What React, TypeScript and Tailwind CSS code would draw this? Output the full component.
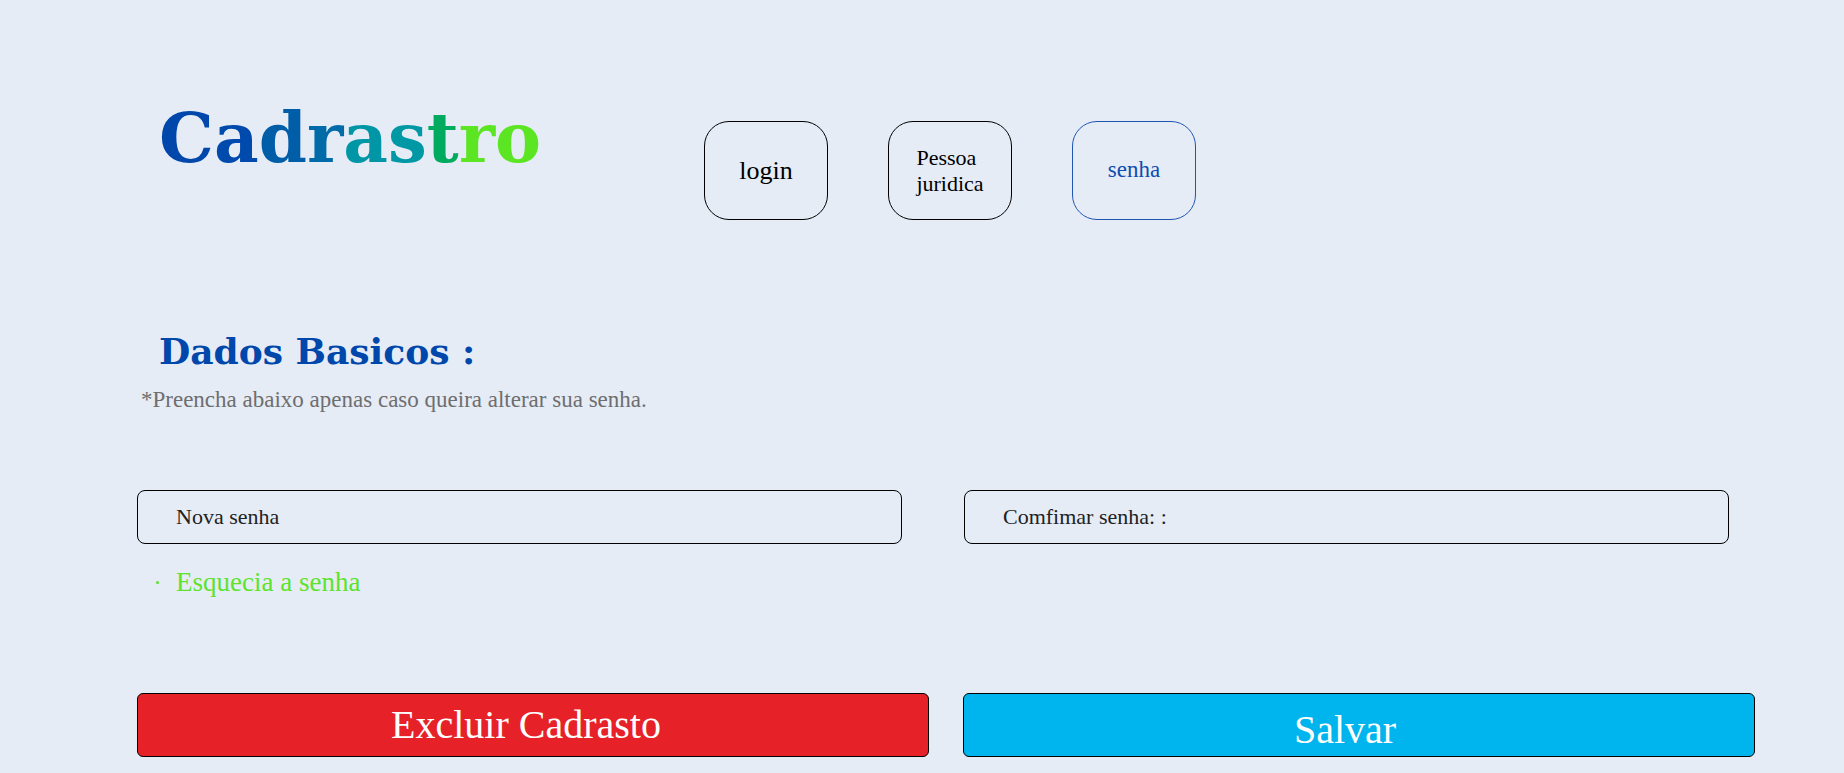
import React from 'react';

const logoLetters: { ch: string; color: string }[] = [
  { ch: 'C', color: '#0047ab' },
  { ch: 'a', color: '#0049ad' },
  { ch: 'd', color: '#005ea9' },
  { ch: 'r', color: '#006ba8' },
  { ch: 'a', color: '#0096a6' },
  { ch: 's', color: '#0098a5' },
  { ch: 't', color: '#00ab5f' },
  { ch: 'r', color: '#5ce522' },
  { ch: 'o', color: '#5ce522' },
];

export default function App() {
  return (
    <div className="min-h-screen bg-[#e5ecf6] font-['Liberation_Serif',serif] text-black">
      {/* topo: logo + abas */}
      <div className="flex items-start pt-[103px] pl-[159px]">
        <h1 className="w-[545px] font-['DejaVu_Serif',serif] text-[69px] font-bold leading-none">
          {logoLetters.map((l, i) => (
            <span key={i} style={{ color: l.color }}>
              {l.ch}
            </span>
          ))}
        </h1>
        <div className="mt-[18px] flex gap-[60px]">
          <button className="flex h-[99px] w-[124px] items-center justify-center rounded-[25px] border border-black text-[26px]">
            login
          </button>
          <button className="flex h-[99px] w-[124px] items-center justify-center rounded-[25px] border border-black">
            <span className="text-left text-[22px] leading-[26px]">
              Pessoa
              <br />
              juridica
            </span>
          </button>
          <button className="flex h-[99px] w-[124px] items-center justify-center rounded-[25px] border border-[#1f56b3] text-[23px] text-[#0f4cb0]">
            senha
          </button>
        </div>
      </div>

      {/* dados basicos */}
      <h2 className="mt-[110px] ml-[159px] font-['DejaVu_Serif',serif] text-[36px] font-bold leading-[42px] text-[#0047ab]">
        Dados Basicos :
      </h2>
      <p className="mt-[14px] ml-[141px] text-[23px] leading-[28px] text-[#6e6e6e]">
        *Preencha abaixo apenas caso queira alterar sua senha.
      </p>

      <div className="mt-[76px] ml-[137px] flex gap-[62px]">
        <input
          type="password"
          placeholder="Nova senha"
          className="h-[54px] w-[765px] rounded-[8px] border border-black bg-transparent pl-[38px] text-[22px] outline-none placeholder:text-[#222]"
        />
        <input
          type="password"
          placeholder="Comfimar senha: :"
          className="h-[54px] w-[765px] rounded-[8px] border border-black bg-transparent pl-[38px] text-[22px] outline-none placeholder:text-[#222]"
        />
      </div>

      <div className="mt-[22px] ml-[156px] flex items-center">
        <span className="mr-[17px] h-[3px] w-[3px] rounded-full bg-[#5de32c]" />
        <a className="text-[27px] leading-[32px] text-[#5de32c]">Esquecia a senha</a>
      </div>

      <div className="mt-[95px] ml-[137px] flex gap-[34px]">
        <button className="flex h-[64px] w-[792px] items-center justify-center rounded-[6px] border border-black bg-[#e62228] pr-[14px] text-[40px] text-white">
          Excluir Cadrasto
        </button>
        <button className="flex h-[64px] w-[792px] items-center justify-center rounded-[6px] border border-black bg-[#00b4ed] pt-[10px] pr-[28px] text-[40px] text-white">
          Salvar
        </button>
      </div>
    </div>
  );
}
